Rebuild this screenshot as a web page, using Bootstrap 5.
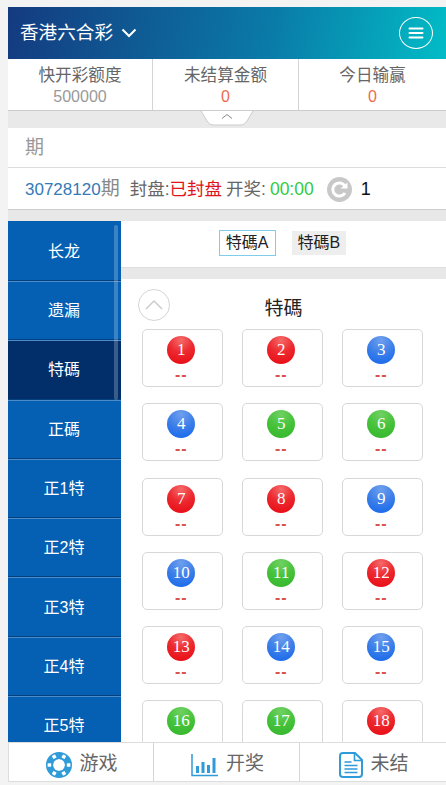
<!DOCTYPE html>
<html lang="zh">
<head>
  <meta charset="UTF-8">
  <title>香港六合彩</title>
  <meta name="viewport" content="width=device-width, initial-scale=1">
  <link href="https://cdn.jsdelivr.net/npm/bootstrap@5.3.0/dist/css/bootstrap.min.css" rel="stylesheet">
  <style>
    html, body { height: 100%; overflow: hidden; }
    body {
      margin: 0;
      padding: 7px 0 3px 8px;
      background: #f3f3f3;
      font-family: "Liberation Sans", "Noto Sans CJK SC", sans-serif;
      color: #666;
    }
    .app-shell { height: 775px; background: #fff; overflow: hidden; }

    .top-bar {
      height: 52px;
      padding: 0 13px 0 12px;
      background: linear-gradient(100deg, #143a80 0%, #0a7ba8 60%, #02bcc6 100%);
      color: #fff;
      font-size: 18.6px;
    }
    .menu-btn {
      width: 34px;
      height: 32px;
      border: 1px solid #fff;
      border-radius: 50%;
    }

    .stat-row { height: 52px; border-bottom: 1px solid #ccc; text-align: center; }
    .stat-cell { width: 145px; flex: none; padding-top: 7px; border-right: 1px solid #d5d5d5; font-size: 16.6px; line-height: 20px; color: #666; }
    .stat-cell:nth-child(2) { width: 146px; }
    .stat-cell:last-child { flex: 1 1 0; width: auto; border-right: 0; }
    .stat-val { font-size: 16px; color: #999; line-height: 21px; }
    .stat-hot { color: #ef6a4e; }

    .fold-strip { height: 17px; background: #e9e9e9; }

    .issue-row { height: 40px; padding: 2px 0 0 17px; border-bottom: 1px solid #ddd; font-size: 19px; color: #999; }
    .timer-row { height: 42px; padding: 2px 0 0 17px; border-bottom: 1px solid #ccc; font-size: 17.5px; color: #666; white-space: nowrap; }
    .issue-no { color: #337ab7; font-size: 17px; }
    .issue-qi { color: #888; font-size: 19px; margin-right: 10px; }
    .closed-txt { color: #e0141c; }
    .clock-txt { color: #2ecc40; }
    .count-txt { color: #111; font-size: 18px; margin-left: 9px; }
    .reload-ico { margin-left: 13px; flex: none; }
    .gap-band { height: 11px; background: #e8e8e8; }

    .play-wrap { height: 521px; overflow: hidden; position: relative; }
    .side-menu { width: 113px; flex: none; }
    .side-link {
      display: flex;
      align-items: center;
      justify-content: center;
      height: 59.3px;
      padding: 2px 1px 0 0;
      background: #0560b4;
      border-bottom: 1px solid #04407e;
      box-shadow: inset 0 1px 0 #4c8cc8;
      color: #fff;
      font-size: 16px;
      text-decoration: none;
    }
    .side-link:first-child { height: 60px; box-shadow: none; }
    .side-link.side-on { background: #022f69; }
    .side-thumb {
      position: absolute;
      left: 106px;
      top: 4px;
      width: 4px;
      height: 175px;
      background: rgba(255, 255, 255, .22);
      border-radius: 2px;
    }

    .tab-bar { height: 47px; padding: 0 2px 3px 0; border-bottom: 1px solid #ddd; font-size: 16px; color: #222; }
    .type-btn { padding: 0 6px; height: 24px; line-height: 23px; background: #eee; }
    .type-btn.type-on { background: #fff; border: 1px solid #7fcdea; height: 26px; padding: 0 6px; line-height: 24px; }

    .panel-head { height: 50px; position: relative; font-size: 19px; color: #222; padding-top: 16px; text-align: center; }
    .up-circle {
      position: absolute;
      left: 17px;
      top: 10px;
      width: 32px;
      height: 32px;
      border: 1px solid #d5d5d5;
      border-radius: 50%;
    }
    .ball-grid {
      display: grid;
      grid-template-columns: repeat(3, 80.5px);
      column-gap: 19.5px;
      row-gap: 16.25px;
      padding-left: 21px;
    }
    .ball-card {
      height: 58px;
      padding: 6px 2px 0 0;
      border: 1px solid #d8d8d8;
      border-radius: 5px;
      text-align: center;
    }
    .ball {
      display: block;
      width: 28px;
      height: 28px;
      margin: 0 auto;
      border-radius: 50%;
      color: #fff;
      font-size: 17px;
      line-height: 28px;
      font-family: "Liberation Serif", "Noto Sans CJK SC", serif;
    }
    .ball-r { background: radial-gradient(circle at 50% 15%, #f56a6a 0%, #ec2a30 45%, #e8060f 100%); }
    .ball-b { background: radial-gradient(circle at 50% 15%, #6f9fee 0%, #3b7ee8 50%, #1265ee 100%); }
    .ball-g { background: radial-gradient(circle at 50% 15%, #70d062 0%, #45c23a 50%, #33b52a 100%); }
    .ball-odds { display: block; color: #d9534f; font-size: 16px; line-height: 14px; margin-top: 4px; font-weight: 700; letter-spacing: 1px; }

    .foot-bar { height: 40px; border: 1px solid #ddd; border-right: 0; background: #fff; font-size: 19px; color: #666; }
    .foot-cell { width: 145px; flex: none; gap: 7px; padding: 5px 0 0 2px; border-right: 1px solid #d5d5d5; }
    .foot-cell:nth-child(2) { width: 146px; }
    .foot-cell:last-child { flex: 1 1 0; width: auto; border-right: 0; }
  </style>
</head>
<body>
  <div class="app-shell d-flex flex-column">
    <div class="top-bar d-flex align-items-center justify-content-between">
      <div class="d-flex align-items-center gap-2">
        <span>香港六合彩</span>
        <svg width="16" height="10" viewBox="0 0 16 10"><path d="M1.500 1.500 8 8l6.500-6.500" fill="none" stroke="#fff" stroke-width="2"/></svg>
      </div>
      <div class="menu-btn d-flex align-items-center justify-content-center">
        <svg width="16" height="12" viewBox="0 0 16 12"><path d="M1.500 1.500h13M1.500 6h13M1.500 10.500h13" stroke="#fff" stroke-width="2" stroke-linecap="round"/></svg>
      </div>
    </div>

    <div class="stat-row d-flex">
      <div class="stat-cell">快开彩额度<div class="stat-val">500000</div></div>
      <div class="stat-cell">未结算金额<div class="stat-val stat-hot">0</div></div>
      <div class="stat-cell">今日输赢<div class="stat-val stat-hot">0</div></div>
    </div>

    <div class="fold-strip d-flex justify-content-center">
      <svg width="54" height="15" viewBox="0 0 54 15">
        <path d="M0.500 -1 7 10q2 4 6 4h28q4 0 6-4L53.500 -1z" fill="#fff" stroke="#ccc"/>
        <path d="M22 7.500l5-4 5 4" fill="none" stroke="#888"/>
      </svg>
    </div>

    <div class="issue-row d-flex align-items-center">期</div>

    <div class="timer-row d-flex align-items-center">
      <span class="issue-no">30728120</span><span class="issue-qi">期</span>
      <span>封盘:</span><span class="closed-txt">已封盘</span><span class="ms-1">开奖:</span><span class="clock-txt ms-1">00:00</span>
      <svg class="reload-ico" width="25" height="25" viewBox="0 0 25 25">
        <circle cx="12.500" cy="12.500" r="12.500" fill="#c8c8c8"/>
        <path d="M18 16a6.600 6.600 0 1 1 0-7" fill="none" stroke="#fff" stroke-width="3"/>
        <path d="M13.500 11.500h7v-6z" fill="#fff"/>
      </svg>
      <span class="count-txt">1</span>
    </div>

    <div class="gap-band"></div>

    <div class="play-wrap d-flex">
      <div class="side-menu">
        <a class="side-link" href="#">长龙</a>
        <a class="side-link" href="#">遗漏</a>
        <a class="side-link side-on" href="#">特碼</a>
        <a class="side-link" href="#">正碼</a>
        <a class="side-link" href="#">正1特</a>
        <a class="side-link" href="#">正2特</a>
        <a class="side-link" href="#">正3特</a>
        <a class="side-link" href="#">正4特</a>
        <a class="side-link" href="#">正5特</a>
      </div>
      <div class="side-thumb"></div>

      <div class="flex-grow-1">
        <div class="tab-bar d-flex align-items-center justify-content-center gap-3">
          <span class="type-btn type-on">特碼A</span>
          <span class="type-btn">特碼B</span>
        </div>
        <div class="gap-band"></div>
        <div class="panel-head">
          <div class="up-circle d-flex align-items-center justify-content-center">
            <svg width="18" height="10" viewBox="0 0 18 10"><path d="M1 9l8-8 8 8" fill="none" stroke="#ccc" stroke-width="1.500"/></svg>
          </div>
          特碼
        </div>
        <div class="ball-grid" id="balls"></div>
      </div>
    </div>

    <div class="foot-bar d-flex">
      <div class="foot-cell d-flex align-items-center justify-content-center">
        <svg width="26" height="26" viewBox="0 0 26 26">
          <circle cx="13" cy="13" r="13" fill="#2f9bd8"/>
          <circle cx="13" cy="13" r="6" fill="#fff"/>
          <circle cx="13" cy="13" r="6.500" fill="none" stroke="#2f9bd8"/>
          <g fill="#fff" transform="translate(13 13)">
            <rect x="7.800" y="-1.800" width="3.600" height="3.600" rx=".6"/>
            <rect x="7.800" y="-1.800" width="3.600" height="3.600" rx=".6" transform="rotate(60)"/>
            <rect x="7.800" y="-1.800" width="3.600" height="3.600" rx=".6" transform="rotate(120)"/>
            <rect x="7.800" y="-1.800" width="3.600" height="3.600" rx=".6" transform="rotate(180)"/>
            <rect x="7.800" y="-1.800" width="3.600" height="3.600" rx=".6" transform="rotate(240)"/>
            <rect x="7.800" y="-1.800" width="3.600" height="3.600" rx=".6" transform="rotate(300)"/>
          </g>
        </svg>
        <span>游戏</span>
      </div>
      <div class="foot-cell d-flex align-items-center justify-content-center">
        <svg width="28" height="24" viewBox="0 0 28 24">
          <path d="M1 1v21.500h26" fill="none" stroke="#2f9bd8" stroke-width="1.500"/>
          <path d="M5 13h3v7H5zM10.500 9h3v11h-3zM16 12h3v8h-3zM21.500 5h3v15h-3z" fill="#2f9bd8"/>
        </svg>
        <span>开奖</span>
      </div>
      <div class="foot-cell d-flex align-items-center justify-content-center">
        <svg width="24" height="26" viewBox="0 0 24 26">
          <path d="M4 1h12l7 7v14a3 3 0 0 1-3 3H4a3 3 0 0 1-3-3V4a3 3 0 0 1 3-3z" fill="none" stroke="#2f9bd8" stroke-width="2"/>
          <path d="M15.500 1.500V8.500h7M5.500 10h7M5.500 13.500h13M5.500 17h13M5.500 20.500h13" fill="none" stroke="#2f9bd8" stroke-width="1.600"/>
        </svg>
        <span>未结</span>
      </div>
    </div>
  </div>

  <script src="https://cdn.jsdelivr.net/npm/bootstrap@5.3.0/dist/js/bootstrap.bundle.min.js"></script>
  <script>
    const colours = "r r b b g g r r b b g r r b b g g r".split(" ");
    document.getElementById("balls").innerHTML = colours.map((c, i) => `
      <div class="ball-card">
        <span class="ball ball-${c}">${i + 1}</span>
        <span class="ball-odds">--</span>
      </div>`).join("");
  </script>
</body>
</html>
